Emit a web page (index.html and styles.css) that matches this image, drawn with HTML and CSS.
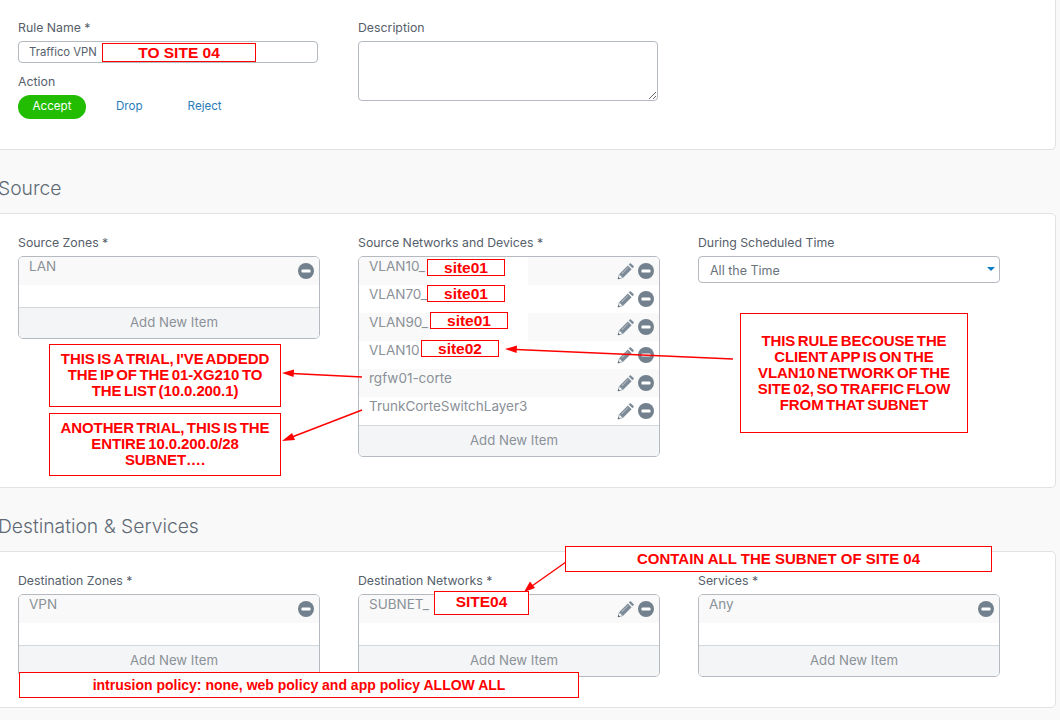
FILE: index.html
```html
<!DOCTYPE html>
<html lang="en">
<head>
<meta charset="utf-8">
<title>Firewall rule</title>
<link rel="stylesheet" href="styles.css">
</head>
<body>
<svg class="icon-defs" width="0" height="0" aria-hidden="true">
  <symbol id="pencil" viewBox="0 0 18 18">
    <path fill="#7d8b98" d="M13.4 .9 17.1 4.6 15.4 6.3 11.7 2.600Z"/>
    <path fill="#7d8b98" d="M10.8 3.4 14.6 7.200 6.100 15.700 2.300 11.900Z"/>
    <path fill="#d5dade" d="M4.600 11.500 10.900 5.200 11.300 5.600 5 11.900Z"/>
    <path fill="#fff" stroke="#7d8b98" stroke-width=".7" d="M2.300 12.400 5.600 15.700 1.200 16.800Z"/>
    <path fill="#5d6873" d="M1.200 14.800 3.100 16.700.8 17.200Z"/>
  </symbol>
  <symbol id="minus" viewBox="0 0 16 16">
    <circle cx="8" cy="8" r="8" fill="#73818e"/>
    <rect x="3.500" y="6.400" width="9" height="3.200" rx="1.200" fill="#fff"/>
  </symbol>
</svg>
<main class="page">
  <section class="card card-first">
    <div class="columns">
      <div>
        <div class="label">Rule Name *</div>
        <div class="input">Traffico VPN</div>
        <div class="label label-action">Action</div>
        <div class="actions">
          <span class="pill">Accept</span>
          <span class="option option-drop">Drop</span>
          <span class="option option-reject">Reject</span>
        </div>
      </div>
      <div>
        <div class="label">Description</div>
        <textarea class="textarea"></textarea>
      </div>
    </div>
  </section>

  <h2 class="heading">Source</h2>
  <section class="card">
    <div class="columns">
      <div>
        <div class="label">Source Zones *</div>
        <div class="box">
          <div class="rows rows-short">
            <div class="row shade"><span>LAN</span><svg class="ic"><use href="#minus"/></svg></div>
          </div>
          <div class="add">Add New Item</div>
        </div>
      </div>
      <div>
        <div class="label">Source Networks and Devices *</div>
        <div class="box">
          <div class="rows">
            <div class="row shade"><span>VLAN10_</span><i class="patch"></i><svg class="ic ic-edit"><use href="#pencil"/></svg><svg class="ic"><use href="#minus"/></svg></div>
            <div class="row"><span>VLAN70_</span><svg class="ic ic-edit"><use href="#pencil"/></svg><svg class="ic"><use href="#minus"/></svg></div>
            <div class="row shade"><span>VLAN90_</span><i class="patch patch-alt"></i><svg class="ic ic-edit"><use href="#pencil"/></svg><svg class="ic"><use href="#minus"/></svg></div>
            <div class="row"><span>VLAN10</span><svg class="ic ic-edit"><use href="#pencil"/></svg><svg class="ic"><use href="#minus"/></svg></div>
            <div class="row shade"><span>rgfw01-corte</span><svg class="ic ic-edit"><use href="#pencil"/></svg><svg class="ic"><use href="#minus"/></svg></div>
            <div class="row"><span>TrunkCorteSwitchLayer3</span><svg class="ic ic-edit"><use href="#pencil"/></svg><svg class="ic"><use href="#minus"/></svg></div>
          </div>
          <div class="add">Add New Item</div>
        </div>
      </div>
      <div>
        <div class="label">During Scheduled Time</div>
        <div class="select">All the Time<i class="caret"></i></div>
      </div>
    </div>
  </section>

  <h2 class="heading">Destination &amp; Services</h2>
  <section class="card">
    <div class="columns">
      <div>
        <div class="label">Destination Zones *</div>
        <div class="box">
          <div class="rows rows-short">
            <div class="row shade"><span>VPN</span><svg class="ic"><use href="#minus"/></svg></div>
          </div>
          <div class="add">Add New Item</div>
        </div>
      </div>
      <div>
        <div class="label">Destination Networks *</div>
        <div class="box">
          <div class="rows rows-short">
            <div class="row shade"><span>SUBNET_</span><svg class="ic ic-edit"><use href="#pencil"/></svg><svg class="ic"><use href="#minus"/></svg></div>
          </div>
          <div class="add">Add New Item</div>
        </div>
      </div>
      <div>
        <div class="label">Services *</div>
        <div class="box">
          <div class="rows rows-short">
            <div class="row shade"><span>Any</span><svg class="ic"><use href="#minus"/></svg></div>
          </div>
          <div class="add">Add New Item</div>
        </div>
      </div>
    </div>
  </section>

  <div class="overlay">
    <svg class="arrows" width="1060" height="720" viewBox="0 0 1060 720" aria-hidden="true">
      <g stroke="#f00" stroke-width="1.400" fill="none">
        <path d="M733 359 516 349.500"/>
        <path d="M362 377 292 373.500"/>
        <path d="M362 410 292 437"/>
        <path d="M566 562 532 586"/>
      </g>
      <g fill="#f00">
        <path d="M505 349 517 345.500 516.600 353Z"/>
        <path d="M282 373 294 369.500 293.600 377Z"/>
        <path d="M282 441 292 433 295 440Z"/>
        <path d="M524 592 530 581.500 535 588Z"/>
      </g>
    </svg>
    <div class="note note-title">TO SITE 04</div>
    <div class="note note-s1">site01</div>
    <div class="note note-s2">site01</div>
    <div class="note note-s3">site01</div>
    <div class="note note-s4">site02</div>
    <div class="note note-trial1">THIS IS A TRIAL, I'VE ADDEDD<br>THE IP OF THE 01-XG210 TO<br>THE LIST (10.0.200.1)</div>
    <div class="note note-trial2">ANOTHER TRIAL, THIS IS THE<br>ENTIRE 10.0.200.0/28<br>SUBNET….</div>
    <div class="note note-rule">THIS RULE BECOUSE THE<br>CLIENT APP IS ON THE<br>VLAN10 NETWORK OF THE<br>SITE 02, SO TRAFFIC FLOW<br>FROM THAT SUBNET</div>
    <div class="note note-contain">CONTAIN ALL THE SUBNET OF SITE 04</div>
    <div class="note note-site04">SITE04</div>
    <div class="note note-policy">intrusion policy: none, web policy and app policy ALLOW ALL</div>
  </div>
</main>
</body>
</html>
```
FILE: styles.css
```css
* { box-sizing: border-box; }
html, body { margin: 0; height: 720px; overflow: hidden; }
body {
  background: #f9f9f9;
  font-family: Inter, "Noto Sans", sans-serif;
  color: #56606b;
}
.icon-defs { position: absolute; }
.page { position: relative; display: flow-root; height: 720px; }

.card {
  width: 1066px;
  margin-left: -10px;
  padding: 21px 0 30px 27px;
  background: #fff;
  border: 1px solid #e2e2e2;
  border-radius: 5px;
}
.card-first {
  height: 160px;
  margin-top: -10px;
  padding-top: 29px;
  padding-bottom: 0;
}
.columns {
  display: grid;
  grid-template-columns: 302px 302px 302px;
  column-gap: 38px;
}
.label {
  height: 16px;
  margin-bottom: 5px;
  font-size: 12.3px;
  line-height: 16px;
  white-space: nowrap;
}
.label-action { margin-top: 11px; }

.input {
  width: 300px;
  height: 22px;
  padding-left: 10px;
  border: 1px solid #b4bac0;
  border-radius: 4px;
  font-size: 11.3px;
  line-height: 20px;
}
.textarea {
  display: block;
  width: 300px;
  height: 60px;
  border: 1px solid #b4bac0;
  border-radius: 4px;
  background: #fff;
  outline: none;
}
.actions { display: flex; height: 24px; font-size: 11.6px; line-height: 22px; }
.pill {
  width: 68px;
  height: 24px;
  border-radius: 12px;
  background: #22bd00;
  color: #fff;
  text-align: center;
}
.option { color: #2a7dbb; }
.option-drop { margin-left: 30px; }
.option-reject { margin-left: 45px; }

.heading {
  height: 63px;
  margin: 0 0 0 -2px;
  padding-top: 26px;
  font-size: 19.3px;
  font-weight: 300;
  line-height: 24px;
  color: #5f6a75;
}

.box {
  border: 1px solid #b4bac0;
  border-radius: 5px;
  overflow: hidden;
}
.rows-short { height: 50px; }
.row {
  display: flex;
  height: 28px;
  position: relative;
  padding-left: 10px;
  font-size: 13.5px;
  line-height: 18px;
  color: #8a9198;
}
.row span { flex: 1; }
.shade { background: #f9f9f9; }
.patch {
  position: absolute;
  top: 0;
  bottom: 0;
  left: 68px;
  width: 101px;
  background: #fff;
}
.patch-alt { left: 71px; width: 98px; }
.ic {
  flex: none;
  width: 16px;
  height: 16px;
  margin: 6px 5px 0 0;
}
.ic-edit { width: 18px; height: 18px; margin: 5px 3px 0 0; }
.add {
  height: 31px;
  padding-left: 10px;
  border-top: 1px solid #d5d8db;
  background: #f4f5f7;
  font-size: 13.2px;
  line-height: 29px;
  text-align: center;
  color: #8b9198;
}
.select {
  position: relative;
  height: 27px;
  padding-left: 11px;
  border: 1px solid #b4bac0;
  border-radius: 4px;
  font-size: 12.5px;
  line-height: 27px;
  color: #6a737c;
}
.caret {
  position: absolute;
  top: 10px;
  right: 4px;
  border-style: solid;
  border-width: 4px 4px 0;
  border-color: #0b7cc1 transparent transparent;
}

.overlay { position: absolute; inset: 0; }
.arrows { position: absolute; left: 0; top: 0; }
.note {
  position: absolute;
  display: flex;
  align-items: center;
  justify-content: center;
  border: 1px solid #f00;
  background: #fff;
  font-family: "Liberation Sans", Arial, sans-serif;
  font-weight: 700;
  font-size: 15.5px;
  line-height: 16px;
  color: #f00;
  text-align: center;
}
.note-title { left: 102px; top: 43px; width: 154px; height: 19px; }
.note-s1, .note-s2, .note-s3, .note-s4 { width: 78px; height: 17px; }
.note-s1 { left: 427px; top: 259px; }
.note-s2 { left: 427px; top: 285px; }
.note-s3 { left: 430px; top: 312px; }
.note-s4 { left: 421px; top: 340px; }
.note-trial1, .note-trial2 {
  left: 49px;
  width: 232px;
  height: 63px;
  padding-bottom: 2px;
  font-size: 15px;
  letter-spacing: -.1px;
  word-spacing: -1.5px;
}
.note-trial1 { top: 344px; }
.note-trial2 { top: 413px; }
.note-rule {
  left: 740px;
  top: 313px;
  width: 228px;
  height: 120px;
  font-size: 15px;
  letter-spacing: -.1px;
  word-spacing: -1.5px;
}
.note-contain { left: 565px; top: 546px; width: 427px; height: 26px; font-size: 15px; }
.note-site04 { left: 434px; top: 591px; width: 95px; height: 24px; padding-bottom: 2px; }
.note-policy { left: 19px; top: 672px; width: 560px; height: 26px; font-size: 14px; }
```
